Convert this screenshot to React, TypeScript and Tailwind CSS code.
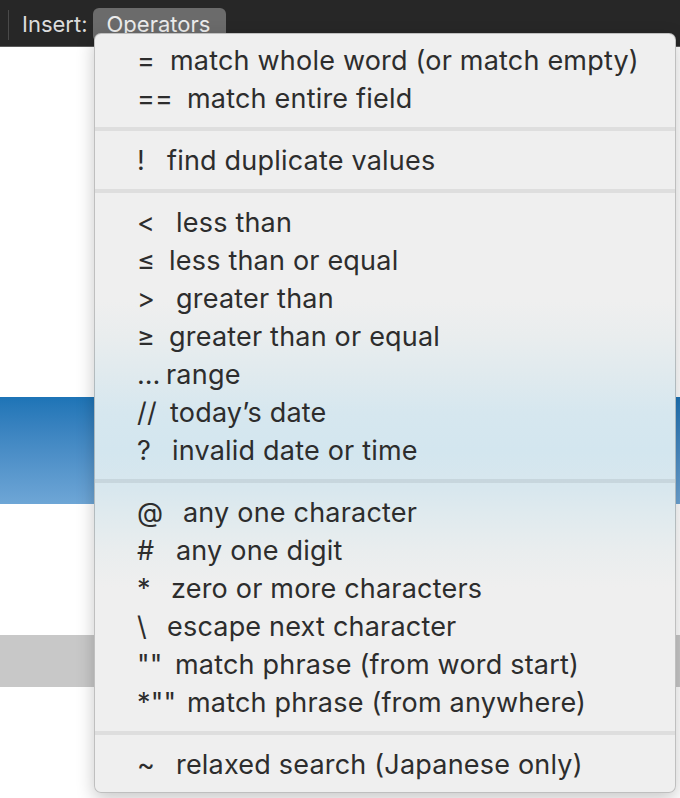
type Item = { sym: string; w: string; label: string };

const groups: Item[][] = [
  [
    { sym: '=', w: 'w-[33px]', label: 'match whole word (or match empty)' },
    { sym: '==', w: 'w-[50px]', label: 'match entire field' },
  ],
  [{ sym: '!', w: 'w-[30px]', label: 'find duplicate values' }],
  [
    { sym: '<', w: 'w-[39px]', label: 'less than' },
    { sym: '≤', w: 'w-[32px]', label: 'less than or equal' },
    { sym: '>', w: 'w-[39px]', label: 'greater than' },
    { sym: '≥', w: 'w-[32px]', label: 'greater than or equal' },
    { sym: '…', w: 'w-[29px]', label: 'range' },
    { sym: '//', w: 'w-[33px]', label: 'today’s date' },
    { sym: '?', w: 'w-[35px]', label: 'invalid date or time' },
  ],
  [
    { sym: '@', w: 'w-[46px]', label: 'any one character' },
    { sym: '#', w: 'w-[39px]', label: 'any one digit' },
    { sym: '*', w: 'w-[34px]', label: 'zero or more characters' },
    { sym: '\\', w: 'w-[30px]', label: 'escape next character' },
    { sym: '""', w: 'w-[38px]', label: 'match phrase (from word start)' },
    { sym: '*""', w: 'w-[50px]', label: 'match phrase (from anywhere)' },
  ],
  [{ sym: '~', w: 'w-[39px]', label: 'relaxed search (Japanese only)' }],
];

export default function App() {
  return (
    <div className="relative w-[680px] h-[798px] overflow-hidden bg-white font-['Inter',sans-serif]">
      {/* Toolbar */}
      <div className="h-[47px] bg-[#272727] border-b border-[#5a5a5a] flex items-start">
        <div className="ml-[8px] mt-[10px] w-px h-[30px] bg-[#4a4a4a]" />
        <span className="ml-[13px] mt-[11px] text-[22px] leading-[26px] text-[#dcdcdc]">Insert:</span>
        <div className="ml-[5px] mt-[8px] h-[34px] w-[133px] rounded-[6px] bg-[#6b6b6b] pl-[14px] pt-[3px] text-[22px] leading-[26px] text-[#ececec]">
          Operators
        </div>
      </div>

      {/* Page content behind the menu */}
      <div className="h-[350px]" />
      <div className="h-[107px] bg-gradient-to-b from-[#1d74b6] to-[#6ea6d6]" />
      <div className="h-[131px]" />
      <div className="h-[52px] bg-[#c8c8c8]" />

      {/* Operators menu */}
      <div className="absolute left-[94px] top-[33px] w-[582px] rounded-[7px] border border-black/20 shadow-[0_6px_18px_rgba(0,0,0,0.22)] bg-[linear-gradient(to_bottom,#efefef_0%,#efefef_35%,#e9edee_40%,#e0eaee_45%,#d6e7ef_50%,#d3e6ef_55%,#d8e7ee_60%,#dfeaee_63%,#e9edee_68%,#efefef_73%,#efefef_100%)] pt-[7px] pb-[9px]">
        {groups.map((group, gi) => (
          <div key={gi}>
            {gi > 0 && <div className="my-[10px] h-[4px] bg-black/[0.07]" />}
            {group.map((item) => (
              <div
                key={item.label}
                className="flex h-[38px] items-center pl-[42px] text-[27px] tracking-[0.2px] leading-none text-[#2d2d2d]"
              >
                <span className={`shrink-0 ${item.w}`}>{item.sym}</span>
                <span className="whitespace-nowrap">{item.label}</span>
              </div>
            ))}
          </div>
        ))}
      </div>
    </div>
  );
}
